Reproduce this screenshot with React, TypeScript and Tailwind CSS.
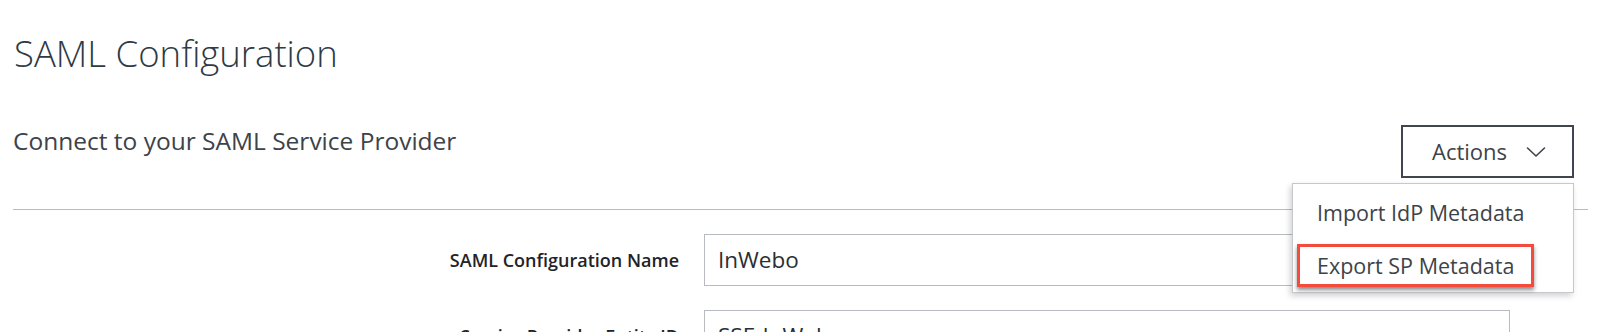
import React from 'react';

const ChevronDown: React.FC = () => (
  <svg width="20" height="10" viewBox="0 0 20 10" fill="none" className="ml-[19px]">
    <path d="M1.5 1 L10 9 L18.5 1" stroke="#3d4349" strokeWidth="1.6" strokeLinecap="round" strokeLinejoin="round" />
  </svg>
);

const FormRow: React.FC<{ label: string; value: string }> = ({ label, value }) => (
  <div className="flex items-center">
    <label className="w-[691px] pr-[25px] text-right text-[18px] font-semibold text-[#1f2328]">
      {label}
    </label>
    <div className="w-[806px] h-[52px] border border-[#b8bcc1] bg-white flex items-center px-[13px] text-[22.5px] text-[#2b2f33]">
      {value}
    </div>
  </div>
);

const App: React.FC = () => {
  return (
    <div
      className="relative w-[1600px] h-[332px] overflow-hidden bg-white px-[13px]"
      style={{ fontFamily: '"Open Sans", "Noto Sans", sans-serif' }}
    >
      <h1 className="pt-[31px] text-[36.5px] leading-[44px] font-light text-[#2e3a44] pl-[1px]">
        SAML Configuration
      </h1>

      <div className="mt-[50px] flex items-start justify-between pr-[13px]">
        <p className="text-[24.5px] leading-[32px] text-[#3d4349]">
          Connect to your SAML Service Provider
        </p>
        <button className="w-[173px] h-[53px] border-2 border-[#3f464d] bg-white flex items-center justify-center pl-[3px] text-[22px] text-[#3d4349]">
          Actions
          <ChevronDown />
        </button>
      </div>

      <div className="mt-[31px] h-px bg-[#b8bcc1] w-[1575px]" />

      <div className="mt-[24px] flex flex-col gap-[24px]">
        <FormRow label="SAML Configuration Name" value="InWebo" />
        <FormRow label="Service Provider Entity ID" value="SSE-InWebo" />
      </div>

      {/* open actions menu */}
      <div className="absolute left-[1292px] top-[183px] w-[282px] h-[110px] border border-[#c5c9cd] bg-white shadow-[-2px_3px_6px_rgba(0,0,0,0.18)]">
        <div className="pl-[24px] pt-[14px] text-[21.5px] leading-[30px] text-[#3d4349]">Import IdP Metadata</div>
        <div className="pl-[24px] mt-[23px] text-[21.5px] leading-[30px] text-[#3d4349]">Export SP Metadata</div>
      </div>

      {/* highlight */}
      <div className="absolute left-[1297px] top-[244px] w-[237px] h-[43px] border-[3px] border-[#f44c3c] shadow-[0_3px_4px_rgba(0,0,0,0.45)]" />
    </div>
  );
};

export default App;
